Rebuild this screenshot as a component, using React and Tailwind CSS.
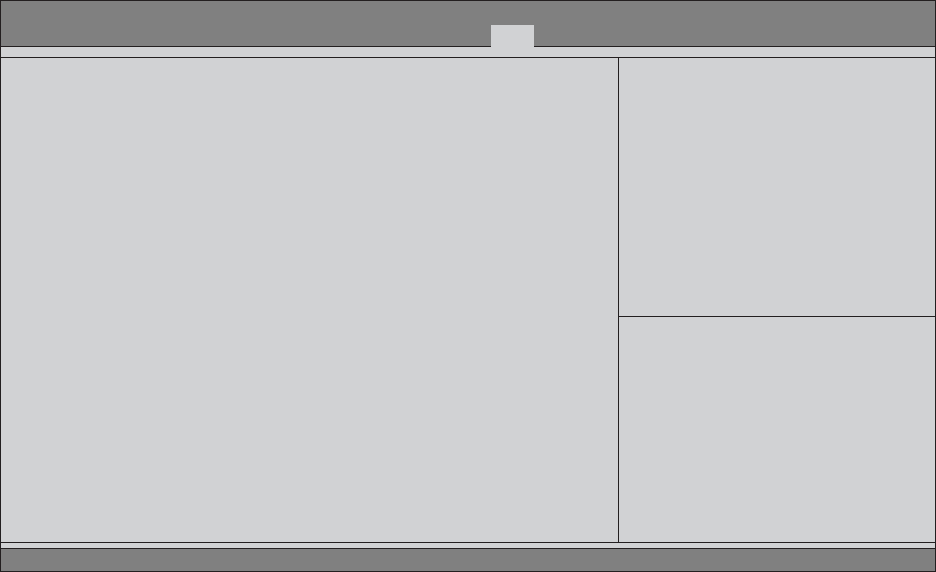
import React from 'react';

const App = () => {
  return (
    <div className="w-[936px] h-[572px] bg-[#231f20] p-px flex flex-col overflow-hidden">
      {/* Header with title tab */}
      <div className="flex h-[46px] shrink-0">
        <div className="w-[490px] bg-[#808080] border-b border-[#231f20]" />
        <div className="w-[43px] flex flex-col">
          <div className="h-[24px] bg-[#808080]" />
          <div className="flex-1 bg-[#d1d2d4]" />
        </div>
        <div className="flex-1 bg-[#808080] border-b border-[#231f20]" />
      </div>
      <div className="h-[10px] shrink-0 bg-[#d1d2d4]" />

      {/* Main panels */}
      <div className="flex mt-px h-[484px] shrink-0 gap-px">
        <div className="w-[617px] bg-[#d1d2d4]" />
        <div className="flex-1 flex flex-col gap-px">
          <div className="h-[258px] bg-[#d1d2d4]" />
          <div className="flex-1 bg-[#d1d2d4]" />
        </div>
      </div>

      <div className="h-[5px] mt-px shrink-0 bg-[#d1d2d4]" />
      <div className="flex-1 mt-px bg-[#808080]" />
    </div>
  );
};

export default App;
